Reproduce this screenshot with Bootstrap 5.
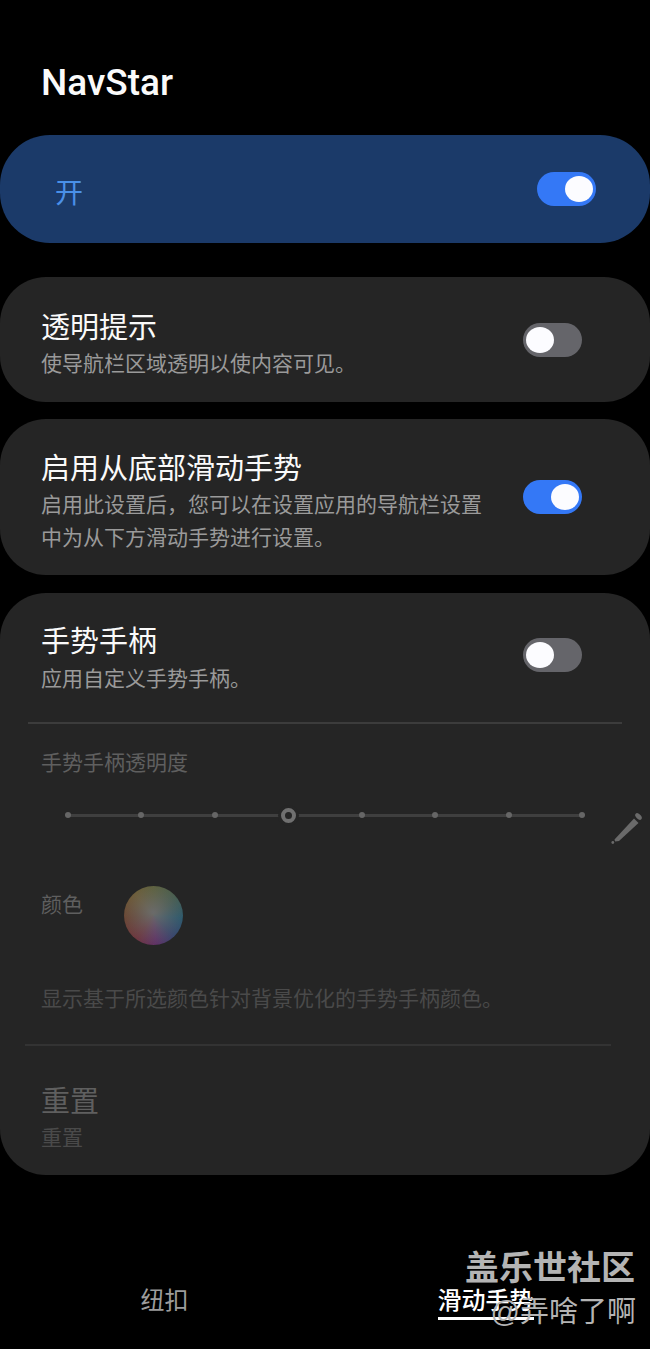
<!DOCTYPE html>
<html lang="zh-CN">
<head>
  <meta charset="UTF-8">
  <title>NavStar</title>
  <link href="https://cdn.jsdelivr.net/npm/bootstrap@5.3.0/dist/css/bootstrap.min.css" rel="stylesheet">
  <style>
    body {
      background: #000;
      color: #fafafa;
      font-family: "Noto Sans CJK SC", "Noto Sans", sans-serif;
    }
    .screen { width: 650px; height: 1349px; position: relative; overflow: hidden; }
    .app-title {
      font-family: Roboto, sans-serif;
      font-size: 37px;
      font-weight: 500;
      line-height: 40px;
      padding: 63px 0 0 41px;
      margin-bottom: 32px;
    }
    .master-panel {
      height: 108px;
      background: #1b3a69;
      border-radius: 50px;
      padding: 0 54px 0 55px;
      margin-bottom: 34px;
      color: #4a90e8;
      font-size: 28px;
    }
    .master-label { padding-top: 4px; }
    .set-panel {
      background: #252525;
      border-radius: 46px;
      margin-bottom: 17px;
    }
    .handle-panel { margin-top: 18px; margin-bottom: 0; }
    .set-row { padding: 0 68px 0 41px; }
    .row-a { height: 125px; }
    .row-b { height: 156px; }
    .row-c { height: 129px; }
    .row-a .set-text, .row-b .set-text { padding-top: 5px; }
    .row-c .set-text { padding-bottom: 2px; }
    .row-c .sw { margin-top: -6px; }
    .set-name { font-size: 29px; line-height: 40px; }
    .set-desc { font-size: 21px; line-height: 33px; color: #9a9a9a; margin-top: 1px; }
    .row-c .set-desc { margin-top: 2px; }
    .sw {
      width: 59px;
      height: 34px;
      border-radius: 17px;
      background: #65656a;
      padding: 4px 3px;
      flex-shrink: 0;
    }
    .sw-on { background: #3478f6; justify-content: flex-end; }
    .sw-knob { width: 28px; height: 26px; border-radius: 50%; background: #fcfcff; }
    .rule-a { height: 2px; background: #3c3c3c; margin: 0 28px; }
    .rule-b { height: 2px; background: #333; margin: 0 39px 0 25px; }
    .dim-label { font-size: 21px; line-height: 30px; color: #5f5f5f; }
    .opacity-block { padding: 22px 0 0 41px; height: 161px; position: relative; }
    .slider-track {
      width: 528px;
      height: 14px;
      margin: 32px 0 0 20px;
      background: linear-gradient(#3f3f3f, #3f3f3f) center / calc(100% - 14px) 3px no-repeat;
    }
    .slider-stop { width: 14px; height: 14px; flex-shrink: 0; }
    .slider-dot { width: 6px; height: 6px; border-radius: 50%; background: #666; }
    .slider-thumb { width: 15px; height: 15px; border-radius: 50%; border: 4px solid #707070; box-shadow: 0 0 0 3px #252525; background: #252525; }
    .pen-icon { position: absolute; right: 7px; top: 88px; }
    .color-block { padding: 0 0 0 41px; height: 85px; }
    .color-block .dim-label { padding-top: 3px; }
    .color-wheel {
      width: 59px;
      height: 59px;
      margin: 1px 0 0 41px;
      border-radius: 50%;
      background:
        radial-gradient(circle at 50% 45%, #6a6a6a 0, rgba(106,106,106,.5) 40%, rgba(106,106,106,0) 85%),
        conic-gradient(from 0deg, #5a5f30, #3c5a4a 50deg, #20566e 95deg, #30416e 135deg, #5e2a66 175deg, #6e2f3a 215deg, #6a3f2a 265deg, #6f5a2a 320deg, #5a5f30);
    }
    .hint-line { padding: 0 41px 0 41px; font-size: 21px; line-height: 30px; color: #4a4a4a; height: 62px; margin-top: 12px; }
    .reset-block { padding: 33px 41px 0; height: 129px; }
    .reset-name { font-size: 29px; line-height: 40px; color: #5f5f5f; }
    .reset-desc { font-size: 21px; line-height: 34px; color: #4a4a4a; }
    .tab-bar { position: absolute; left: 0; right: 0; top: 1282px; }
    .tab-cell { width: 325px; text-align: center; font-size: 24px; line-height: 34px; color: #9c9c9c; }
    .tab-plain { padding-left: 4px; }
    .tab-active { color: #fff; font-weight: 500; padding-right: 4px; }
    .tab-active span { display: inline-block; padding-bottom: 1px; border-bottom: 3px solid #fff; }
    .mark-a {
      position: absolute; right: 15px; top: 1242px;
      font-size: 34px; font-weight: 700; line-height: 48px; color: #b4b4b4;
    }
    .mark-b {
      position: absolute; right: 14px; top: 1292px;
      font-size: 29px; line-height: 40px; color: #b4b4b4;
      font-family: "Liberation Sans", "Noto Sans CJK SC", sans-serif;
    }
  </style>
</head>
<body>
<div class="screen">
  <div class="app-title">NavStar</div>

  <!-- master switch -->
  <div class="master-panel d-flex align-items-center justify-content-between">
    <span class="master-label">开</span>
    <span class="sw sw-on d-flex"><span class="sw-knob"></span></span>
  </div>

  <div class="set-panel">
    <div class="set-row row-a d-flex align-items-center justify-content-between">
      <div class="set-text">
        <div class="set-name">透明提示</div>
        <div class="set-desc">使导航栏区域透明以使内容可见。</div>
      </div>
      <span class="sw d-flex"><span class="sw-knob"></span></span>
    </div>
  </div>

  <div class="set-panel">
    <div class="set-row row-b d-flex align-items-center justify-content-between">
      <div class="set-text">
        <div class="set-name">启用从底部滑动手势</div>
        <div class="set-desc">启用此设置后，您可以在设置应用的导航栏设置<br>中为从下方滑动手势进行设置。</div>
      </div>
      <span class="sw sw-on d-flex"><span class="sw-knob"></span></span>
    </div>
  </div>

  <div class="set-panel handle-panel">
    <div class="set-row row-c d-flex align-items-center justify-content-between">
      <div class="set-text">
        <div class="set-name">手势手柄</div>
        <div class="set-desc">应用自定义手势手柄。</div>
      </div>
      <span class="sw d-flex"><span class="sw-knob"></span></span>
    </div>
    <div class="rule-a"></div>

    <div class="opacity-block">
      <div class="dim-label">手势手柄透明度</div>
      <div class="slider-track d-flex align-items-center justify-content-between">
        <span class="slider-stop d-flex align-items-center justify-content-center"><span class="slider-dot"></span></span>
        <span class="slider-stop d-flex align-items-center justify-content-center"><span class="slider-dot"></span></span>
        <span class="slider-stop d-flex align-items-center justify-content-center"><span class="slider-dot"></span></span>
        <span class="slider-stop d-flex align-items-center justify-content-center"><span class="slider-thumb flex-shrink-0"></span></span>
        <span class="slider-stop d-flex align-items-center justify-content-center"><span class="slider-dot"></span></span>
        <span class="slider-stop d-flex align-items-center justify-content-center"><span class="slider-dot"></span></span>
        <span class="slider-stop d-flex align-items-center justify-content-center"><span class="slider-dot"></span></span>
        <span class="slider-stop d-flex align-items-center justify-content-center"><span class="slider-dot"></span></span>
      </div>
      <svg class="pen-icon" width="32" height="32" viewBox="0 0 32 32">
        <path d="M3.500 27.500 L23 6.500 L27.500 11 L8 29 L4 29.500 Z" fill="#6a6a6a"/>
        <ellipse cx="27.500" cy="4.500" rx="4" ry="2.300" transform="rotate(45 27.500 4.500)" fill="#6a6a6a"/>
        <circle cx="1.800" cy="30.500" r="1.400" fill="#6a6a6a"/>
      </svg>
    </div>

    <div class="color-block d-flex align-items-start">
      <div class="dim-label">颜色</div>
      <div class="color-wheel"></div>
    </div>

    <div class="hint-line">显示基于所选颜色针对背景优化的手势手柄颜色。</div>
    <div class="rule-b"></div>

    <div class="reset-block">
      <div class="reset-name">重置</div>
      <div class="reset-desc">重置</div>
    </div>
  </div>

  <div class="tab-bar d-flex">
    <div class="tab-cell tab-plain">纽扣</div>
    <div class="tab-cell tab-active"><span>滑动手势</span></div>
  </div>

  <div class="mark-a">盖乐世社区</div>
  <div class="mark-b">@弄啥了啊</div>
</div>
<script src="https://cdn.jsdelivr.net/npm/bootstrap@5.3.0/dist/js/bootstrap.bundle.min.js"></script>
</body>
</html>
